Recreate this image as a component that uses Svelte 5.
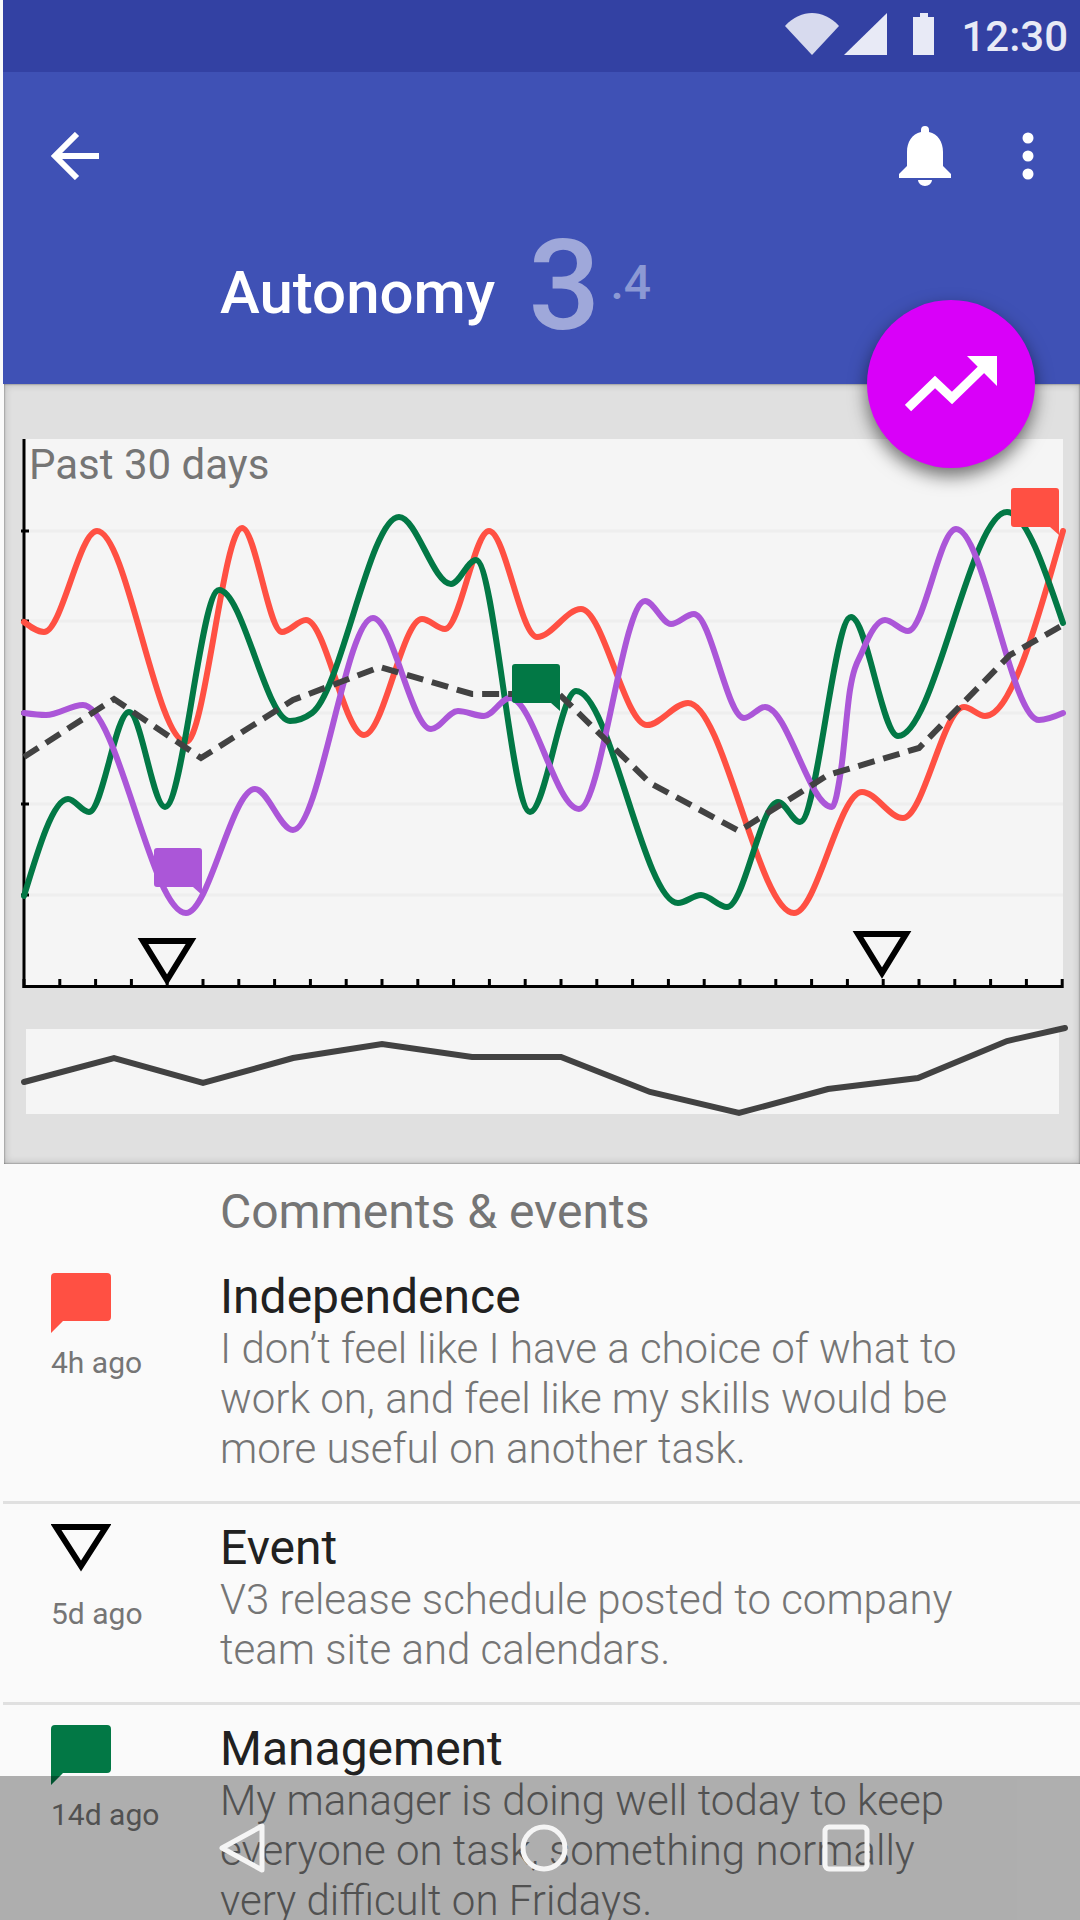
<script>
  const red = [[24,622],[44,632],[97,531],[186,742],[242,528],[282,632],[306,620],[364,735],[422,619],[445,629],[489,531],[537,637],[581,609],[647,725],[688,703],[794,913],[862,792],[903,818],[964,707],[985,716],[1063,531]];
  const green = [[24,896],[68,799],[89,812],[129,712],[165,807],[219,590],[290,721],[312,713],[399,517],[451,584],[476,560],[530,812],[576,691],[678,903],[701,895],[727,907],[778,802],[800,822],[851,617],[898,736],[1007,512],[1063,623]];
  const purple = [[24,713],[46,715],[83,705],[186,913],[255,789],[293,830],[373,618],[431,729],[458,711],[484,716],[510,698],[579,809],[645,601],[671,624],[694,614],[744,718],[765,707],[832,807],[841,770],[850,690],[863,650],[885,620],[908,631],[956,529],[1039,720],[1063,713]];
  const average = [[24,757],[114,699],[201,758],[293,700],[380,667],[472,694],[559,694],[650,783],[739,831],[828,775],[919,748],[1010,655],[1063,625]];
  const spark = [[24,1082],[114,1058],[203,1083],[293,1058],[382,1044],[472,1057],[561,1057],[650,1092],[739,1113],[828,1089],[918,1078],[1007,1041],[1065,1028]];

  const gridLines = [531, 621, 713, 804, 895];
  const xTicks = Array.from({ length: 30 }, (_, i) => 24 + i * 35.8);

  const comments = [
    { kind: 'red', age: '4h ago', title: 'Independence', body: 'I don’t feel like I have a choice of what to work on, and feel like my skills would be more useful on another task.' },
    { kind: 'event', age: '5d ago', title: 'Event', body: 'V3 release schedule posted to company team site and calendars.' },
    { kind: 'green', age: '14d ago', title: 'Management', body: 'My manager is doing well today to keep everyone on task, something normally very difficult on Fridays.' }
  ];

  // monotone cubic through the points, so peaks stay flat on top
  function smooth(pts) {
    const n = pts.length;
    const s = [];
    for (let i = 0; i < n - 1; i++) s.push((pts[i + 1][1] - pts[i][1]) / (pts[i + 1][0] - pts[i][0]));
    const t = new Array(n).fill(0);
    for (let i = 1; i < n - 1; i++) {
      const h0 = pts[i][0] - pts[i - 1][0];
      const h1 = pts[i + 1][0] - pts[i][0];
      const p = (s[i - 1] * h1 + s[i] * h0) / (h0 + h1);
      t[i] = (Math.sign(s[i - 1]) + Math.sign(s[i])) * Math.min(Math.abs(s[i - 1]), Math.abs(s[i]), 0.5 * Math.abs(p));
    }
    t[0] = (3 * s[0] - t[1]) / 2;
    t[n - 1] = (3 * s[n - 2] - t[n - 2]) / 2;
    let d = `M${pts[0][0]},${pts[0][1]}`;
    for (let i = 0; i < n - 1; i++) {
      const dx = (pts[i + 1][0] - pts[i][0]) / 3;
      d += `C${pts[i][0] + dx},${pts[i][1] + dx * t[i]} ${pts[i + 1][0] - dx},${pts[i + 1][1] - dx * t[i + 1]} ${pts[i + 1][0]},${pts[i + 1][1]}`;
    }
    return d;
  }

  const poly = (pts) => pts.map((p) => p.join(',')).join(' ');
  const bubbleRight = 'M3,0H45a3,3 0 0 1 3,3V47L39,39H3a3,3 0 0 1-3-3V3a3,3 0 0 1 3-3Z';
</script>

<div class="screen">
  <header>
    <div class="status">
      <svg class="status-icons" width="160" height="44" viewBox="0 0 160 44">
        <path d="M0,14C8,5 18,1 27,1S46,5 54,14L27,43Z" fill="#d7daee" />
        <path d="M102,1V43H59Z" fill="#e8eaf6" />
        <path d="M128,5h7v-4h8v4h6v38h-21Z" fill="#e8eaf6" />
      </svg>
      <span class="time">12:30</span>
    </div>
    <div class="toolbar">
      <svg width="48" height="48" viewBox="0 0 48 48" fill="none" stroke="#fff" stroke-width="6">
        <path d="M48,24H5M26,2L4,24L26,46" />
      </svg>
      <div class="spacer"></div>
      <svg class="bell" width="52" height="60" viewBox="0 0 52 60" fill="#fff">
        <path d="M26,0a4,4 0 0 1 4,4v2c9,2 14,10 14,20v14l8,8v4H0v-4l8-8V26C8,16 13,8 22,6V4a4,4 0 0 1 4-4ZM19,54h14a7,6 0 0 1-14,0Z" />
      </svg>
      <svg class="dots" width="12" height="48" viewBox="0 0 12 48" fill="#fff">
        <circle cx="6" cy="6" r="5.5" /><circle cx="6" cy="24" r="5.5" /><circle cx="6" cy="42" r="5.5" />
      </svg>
    </div>
    <div class="heading">
      <span class="name">Autonomy</span>
      <span class="score">3</span>
      <span class="decimal">.4</span>
    </div>
    <div class="fab">
      <svg width="92" height="56" viewBox="0 0 92 56" fill="none" stroke="#fff" stroke-width="9">
        <path d="M3,52L30,26L47,42L84,6" />
        <path d="M62,0H92V30Z" fill="#fff" stroke="none" />
      </svg>
    </div>
  </header>

  <section class="panel">
    <svg class="chart" width="1076" height="780" viewBox="4 384 1076 780">
      <rect x="24" y="439" width="1039" height="547" fill="#f5f5f5" />
      <rect x="26" y="1029" width="1033" height="85" fill="#f5f5f5" />
      {#each gridLines as y}
        <line x1="24" x2="1063" y1={y} y2={y} stroke="#eeeeee" stroke-width="3" />
        <line x1="21" x2="29" y1={y} y2={y} stroke="#000" stroke-width="3" />
      {/each}
      <line x1="24" x2="24" y1="439" y2="988" stroke="#000" stroke-width="3" />
      <line x1="23" x2="1063" y1="986.5" y2="986.5" stroke="#000" stroke-width="3" />
      {#each xTicks as x}
        <line x1={x} x2={x} y1="979" y2="988" stroke="#000" stroke-width="3" />
      {/each}
      <text x="29" y="479" class="range">Past 30 days</text>

      <path d={smooth(red)} class="line" stroke="#ff5043" />
      <path d={smooth(green)} class="line" stroke="#027845" />
      <path d={smooth(purple)} class="line" stroke="#ab56d8" />
      <polyline points={poly(average)} class="line dashed" />
      <polyline points={poly(spark)} class="line" stroke="#424242" stroke-linecap="butt" />

      <path d={bubbleRight} transform="translate(1011,488)" fill="#ff5043" />
      <path d={bubbleRight} transform="translate(512,664)" fill="#027845" />
      <path d={bubbleRight} transform="translate(154,848)" fill="#ab56d8" />
      <path d="M143,941H191L167,980Z" fill="none" stroke="#000" stroke-width="6" />
      <path d="M858,934H906L882,973Z" fill="none" stroke="#000" stroke-width="6" />
    </svg>
  </section>

  <section class="list">
    <h2>Comments &amp; events</h2>
    {#each comments as c}
      <article>
        <div class="meta">
          {#if c.kind === 'event'}
            <svg width="60" height="60" viewBox="0 0 60 60">
              <path d="M5,3H55L30,42Z" fill="none" stroke="#000" stroke-width="6" />
            </svg>
          {:else}
            <svg width="60" height="60" viewBox="0 0 60 60" fill={c.kind === 'red' ? '#ff5043' : '#027845'}>
              <path d="M4,0H56a4,4 0 0 1 4,4V44a4,4 0 0 1-4,4H12L0,60V4a4,4 0 0 1 4-4Z" />
            </svg>
          {/if}
          <span class="age">{c.age}</span>
        </div>
        <div class="copy">
          <h3>{c.title}</h3>
          <p>{c.body}</p>
        </div>
      </article>
    {/each}
  </section>

  <nav>
    <svg width="48" height="50" viewBox="0 0 48 50" fill="none" stroke="#f5f5f5" stroke-width="5" stroke-linejoin="round">
      <path d="M44,3V47L4,25Z" />
    </svg>
    <svg width="48" height="48" viewBox="0 0 48 48" fill="none" stroke="#f5f5f5" stroke-width="5">
      <circle cx="24" cy="24" r="21" />
    </svg>
    <svg width="48" height="48" viewBox="0 0 48 48" fill="none" stroke="#f5f5f5" stroke-width="5">
      <rect x="3" y="3" width="42" height="42" rx="4" />
    </svg>
  </nav>
</div>

<style>
  :global(body) {
    margin: 0;
    background: #fff;
  }

  .screen {
    position: relative;
    width: 1080px;
    height: 1920px;
    overflow: hidden;
    padding-left: 3px;
    box-sizing: border-box;
    background: #fafafa;
    font-family: Roboto, "Liberation Sans", sans-serif;
  }

  header {
    position: relative;
    height: 384px;
    background: #3f51b5;
    color: #fff;
  }

  .status {
    height: 72px;
    background: #3341a3;
    display: flex;
    align-items: center;
    justify-content: flex-end;
    padding-right: 12px;
  }

  .status-icons {
    margin-right: 16px;
    margin-top: -4px;
  }

  .time {
    font-size: 42px;
    font-weight: 500;
    color: #e8eaf6;
  }

  .toolbar {
    display: flex;
    align-items: center;
    height: 60px;
    padding: 54px 46px 0 48px;
  }

  .spacer {
    flex: 1;
  }

  .bell {
    margin-right: 71px;
  }

  .heading {
    display: flex;
    align-items: baseline;
    position: absolute;
    left: 217px;
    top: 222px;
  }

  .name {
    position: relative;
    top: -16px;
    font-size: 60px;
    font-weight: 500;
  }

  .score {
    margin-left: 33px;
    font-size: 127px;
    font-weight: 500;
    line-height: 1;
    color: #9fa8da;
  }

  .decimal {
    position: relative;
    top: -30px;
    margin-left: 10px;
    font-size: 48px;
    font-weight: 500;
    color: #8c99d4;
  }

  .fab {
    position: absolute;
    left: 864px;
    top: 300px;
    z-index: 3;
    width: 168px;
    height: 168px;
    border-radius: 50%;
    background: #d900f9;
    box-shadow: 0 8px 18px rgba(0, 0, 0, 0.55);
    display: flex;
    align-items: center;
    justify-content: center;
  }

  .panel {
    position: relative;
    height: 780px;
    margin-left: 1px;
    background: #e0e0e0;
    box-shadow: inset 0 0 2px rgba(0, 0, 0, 0.6), inset 0 0 8px rgba(0, 0, 0, 0.2);
  }

  .chart {
    display: block;
    overflow: visible;
  }

  .range {
    font-size: 42px;
    fill: #757575;
  }

  .line {
    fill: none;
    stroke-width: 6;
    stroke-linecap: round;
  }

  .dashed {
    stroke: #424242;
    stroke-dasharray: 17 9;
    stroke-linecap: butt;
  }

  .list h2 {
    margin: 0;
    padding: 20px 0 13px 217px;
    font-size: 48px;
    line-height: 56px;
    font-weight: 400;
    color: #757575;
  }

  article {
    display: grid;
    grid-template-columns: 217px 1fr;
    border-bottom: 3px solid #e0e0e0;
  }

  .meta {
    padding: 20px 0 0 48px;
    display: flex;
    flex-direction: column;
    align-items: flex-start;
    gap: 12px;
  }

  .meta svg {
    display: block;
  }

  .age {
    font-size: 30px;
    color: #757575;
  }

  .copy {
    padding: 17px 80px 27px 0;
  }

  h3 {
    margin: 0;
    font-size: 48px;
    line-height: 54px;
    font-weight: 400;
    color: #212121;
  }

  p {
    margin: 0;
    font-size: 42px;
    line-height: 50px;
    font-weight: 300;
    color: #757575;
  }

  nav {
    position: absolute;
    left: 0;
    right: 0;
    bottom: 0;
    height: 144px;
    padding-left: 7px;
    box-sizing: border-box;
    background: rgba(0, 0, 0, 0.3);
    display: flex;
    align-items: center;
    justify-content: center;
    gap: 254px;
  }
</style>
